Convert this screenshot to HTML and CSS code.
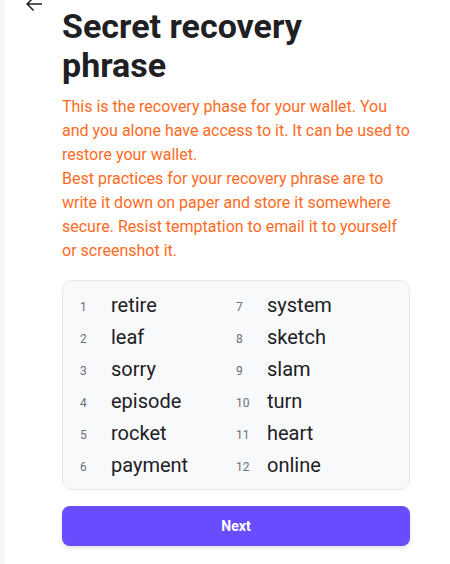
FILE: index.html
```html
<!DOCTYPE html>
<html>
<head>
<meta charset="utf-8">
<link rel="stylesheet" href="styles.css">
</head>
<body>
<div class="page">
  <main class="content">
    <svg class="back" viewBox="0 0 24 24" width="24" height="24"><path d="M20 11.25H6.9l5.2-5.2-1.06-1.06L4 12l7.04 7.01 1.06-1.06-5.2-5.2H20z" fill="#1f2024"/></svg>
    <h1 class="title">Secret recovery phrase</h1>
    <p class="desc">This is the recovery phase for your wallet. You and you alone have access to it. It can be used to restore your wallet.<br>Best practices for your recovery phrase are to write it down on paper and store it somewhere secure. Resist temptation to email it to yourself or screenshot it.</p>
    <div class="card">
      <div class="col">
        <div class="row"><span class="num">1</span><span class="word">retire</span></div>
        <div class="row"><span class="num">2</span><span class="word">leaf</span></div>
        <div class="row"><span class="num">3</span><span class="word">sorry</span></div>
        <div class="row"><span class="num">4</span><span class="word">episode</span></div>
        <div class="row"><span class="num">5</span><span class="word">rocket</span></div>
        <div class="row"><span class="num">6</span><span class="word">payment</span></div>
      </div>
      <div class="col">
        <div class="row"><span class="num">7</span><span class="word">system</span></div>
        <div class="row"><span class="num">8</span><span class="word">sketch</span></div>
        <div class="row"><span class="num">9</span><span class="word">slam</span></div>
        <div class="row"><span class="num">10</span><span class="word">turn</span></div>
        <div class="row"><span class="num">11</span><span class="word">heart</span></div>
        <div class="row"><span class="num">12</span><span class="word">online</span></div>
      </div>
    </div>
    <button class="next">Next</button>
  </main>
</div>
</body>
</html>
```
FILE: styles.css
```css
html, body {
  margin: 0;
  padding: 0;
  background: #ffffff;
  font-family: Roboto, "Noto Sans", sans-serif;
}
.page {
  min-height: 564px;
  border-left: 5px solid #f5f6f8;
  box-sizing: border-box;
  overflow: hidden;
}
.content {
  width: 348px;
  margin-left: 57px;
  display: flex;
  flex-direction: column;
}
.back {
  display: block;
  margin: -8px 0 -9px -40px;
}
.title {
  margin: 0;
  max-width: 280px;
  font-size: 34px;
  line-height: 39px;
  font-weight: 700;
  color: #1f2024;
}
.desc {
  margin: 10px 0 0;
  font-size: 16px;
  line-height: 24px;
  color: #ff6a22;
}
.card {
  margin-top: 17px;
  border: 1px solid #e6e8eb;
  border-radius: 10px;
  background: #f8f9fb;
  padding: 8px 0 8px 17px;
  display: grid;
  grid-template-columns: 156px 1fr;
}
.row {
  height: 32px;
  display: flex;
  align-items: center;
}
.num {
  width: 31px;
  font-size: 12px;
  color: #6b6f7a;
  padding-top: 3px;
}
.word {
  font-size: 20px;
  color: #1f2024;
}
.next {
  margin-top: 16px;
  height: 40px;
  border: none;
  border-radius: 8px;
  background: #6a4cff;
  color: #ffffff;
  font-family: Roboto, "Noto Sans", sans-serif;
  font-size: 14px;
  font-weight: 700;
  box-shadow: 0 2px 4px rgba(0, 0, 0, 0.12);
}
```
